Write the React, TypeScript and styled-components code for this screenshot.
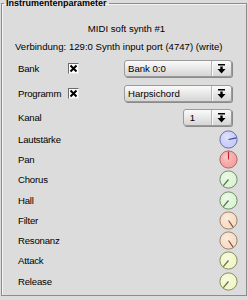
import React from 'react';
import styled, {createGlobalStyle} from 'styled-components';

const Global = createGlobalStyle`
    html, body {
        margin: 0;
        padding: 0;
        background: #dcdcdc;
        overflow: hidden;
    }
    body {
        font-family: "Liberation Sans", Arial, sans-serif;
        font-size: 9.6px;
        color: #000;
    }
`;

const Frame = styled.fieldset`
    margin: -2px 1px 0 1px;
    padding: 0 0 0 0;
    height: 298px;
    box-sizing: border-box;
    border: 1px solid #8c8c8c;
    border-radius: 0;
    box-shadow: inset 1px 1px 0 #f4f4f4;
`;

const Title = styled.legend`
    margin-left: 2px;
    padding: 0 2px;
    font-weight: bold;
    font-size: 9px;
    line-height: 10px;
`;

const Body = styled.div`
    display: flex;
    flex-direction: column;
    padding: 0 8px 0 13px;
`;

const Heading = styled.div`
    text-align: center;
    height: 20px;
    line-height: 20px;
    margin-top: 11px;
`;

const Info = styled.div`
    height: 19px;
    line-height: 20px;
    margin-top: -2px;
`;

const Row = styled.div<{ $h: number }>`
    display: grid;
    grid-template-columns: 50px 54px 1fr;
    align-items: center;
    height: ${p => p.$h}px;
    padding-left: 3px;
`;

const Label = styled.span`
    white-space: nowrap;
    letter-spacing: -0.2px;
`;

const Check = styled.span`
    width: 11px;
    height: 11px;
    box-sizing: border-box;
    background: #fff;
    border: 1px solid;
    border-color: #6c6c6c #e8e8e8 #e8e8e8 #6c6c6c;
    display: flex;
    align-items: center;
    justify-content: center;
`;

const Combo = styled.div<{ $w: number }>`
    justify-self: end;
    width: ${p => p.$w}px;
    height: 17px;
    margin-right: 6px;
    box-sizing: border-box;
    display: flex;
    align-items: stretch;
    border: 1px solid #9a9a9a;
    border-radius: 3px;
    background: linear-gradient(#fbfbfb, #e4e4e4 60%, #d6d6d6);
    box-shadow: 1px 1px 0 #8a8a8a;
`;

const ComboText = styled.span`
    flex: 1;
    padding-left: 3px;
    line-height: 15px;
`;

const ComboButton = styled.span`
    width: 19px;
    border-left: 1px solid #b4b4b4;
    box-shadow: inset 1px 0 0 #fafafa;
    display: flex;
    align-items: center;
    justify-content: center;
`;

const KnobCell = styled.div`
    grid-column: 3;
    justify-self: end;
    display: flex;
`;

const Arrow = () => (
    <svg width="9" height="11" viewBox="0 0 9 11">
        <rect x="1" y="1" width="7" height="1.5" fill="#000" />
        <rect x="3.3" y="3.5" width="2.4" height="3" fill="#000" />
        <polygon points="0.5,6 8.5,6 4.5,10.5" fill="#000" />
    </svg>
);

const Cross = () => (
    <svg width="9" height="9" viewBox="0 0 9 9">
        <path d="M1.5 1.5 L7.5 7.5 M7.5 1.5 L1.5 7.5" stroke="#000" strokeWidth="2" />
    </svg>
);

type KnobProps = { fill: string; edge: string; tick: string; angle: number };

const Knob = ({fill, edge, tick, angle}: KnobProps) => {
    const r = (angle * Math.PI) / 180;
    const x = 9.5 + Math.sin(r) * 8;
    const y = 9.5 - Math.cos(r) * 8;
    const id = 'g' + fill.slice(1);
    return (
        <svg width="19" height="19" viewBox="0 0 19 19">
            <defs>
                <radialGradient id={id} cx="40%" cy="35%" r="70%">
                    <stop offset="0" stopColor="#ffffff" stopOpacity="0.5" />
                    <stop offset="1" stopColor={fill} stopOpacity="0" />
                </radialGradient>
            </defs>
            <circle cx="9.5" cy="9.5" r="8.6" fill={fill} stroke={edge} strokeWidth="1" />
            <circle cx="9.5" cy="9.5" r="8" fill={`url(#${id})`} />
            <line x1="9.5" y1="9.5" x2={x} y2={y} stroke={tick} strokeWidth="1.2" />
        </svg>
    );
};

const knobs = [
    {name: 'Lautstärke', fill: '#c9cdf7', edge: '#646cae', tick: '#3a42a0', angle: 78},
    {name: 'Pan', fill: '#f6a2a2', edge: '#b06262', tick: '#b03030', angle: 0},
    {name: 'Chorus', fill: '#dbf5d3', edge: '#6f8a6b', tick: '#5a6a58', angle: 220},
    {name: 'Hall', fill: '#dbf5d3', edge: '#6f8a6b', tick: '#5a6a58', angle: 220},
    {name: 'Filter', fill: '#f9dcc4', edge: '#97806e', tick: '#6e5a4a', angle: 145},
    {name: 'Resonanz', fill: '#f9dcc4', edge: '#97806e', tick: '#6e5a4a', angle: 145},
    {name: 'Attack', fill: '#f1f6c8', edge: '#87885e', tick: '#6a6a40', angle: 220},
    {name: 'Release', fill: '#f1f6c8', edge: '#87885e', tick: '#6a6a40', angle: 220},
];

const App = () => {
    return (
        <React.Fragment>
            <Global />
            <Frame>
                <Title>Instrumentenparameter</Title>
                <Body>
                    <Heading>MIDI soft synth #1</Heading>
                    <Info>Verbindung: 129:0 Synth input port (4747) (write)</Info>
                    <Row $h={25}>
                        <Label>Bank</Label>
                        <Check><Cross /></Check>
                        <Combo $w={108}>
                            <ComboText>Bank 0:0</ComboText>
                            <ComboButton><Arrow /></ComboButton>
                        </Combo>
                    </Row>
                    <Row $h={24}>
                        <Label>Programm</Label>
                        <Check><Cross /></Check>
                        <Combo $w={108}>
                            <ComboText>Harpsichord</ComboText>
                            <ComboButton><Arrow /></ComboButton>
                        </Combo>
                    </Row>
                    <Row $h={24}>
                        <Label>Kanal</Label>
                        <span />
                        <Combo $w={49}>
                            <ComboText>&nbsp;1</ComboText>
                            <ComboButton><Arrow /></ComboButton>
                        </Combo>
                    </Row>
                    {knobs.map(k => (
                        <Row $h={20.3} key={k.name}>
                            <Label>{k.name}</Label>
                            <KnobCell>
                                <Knob fill={k.fill} edge={k.edge} tick={k.tick} angle={k.angle} />
                            </KnobCell>
                        </Row>
                    ))}
                </Body>
            </Frame>
        </React.Fragment>
    );
};

export default App;
